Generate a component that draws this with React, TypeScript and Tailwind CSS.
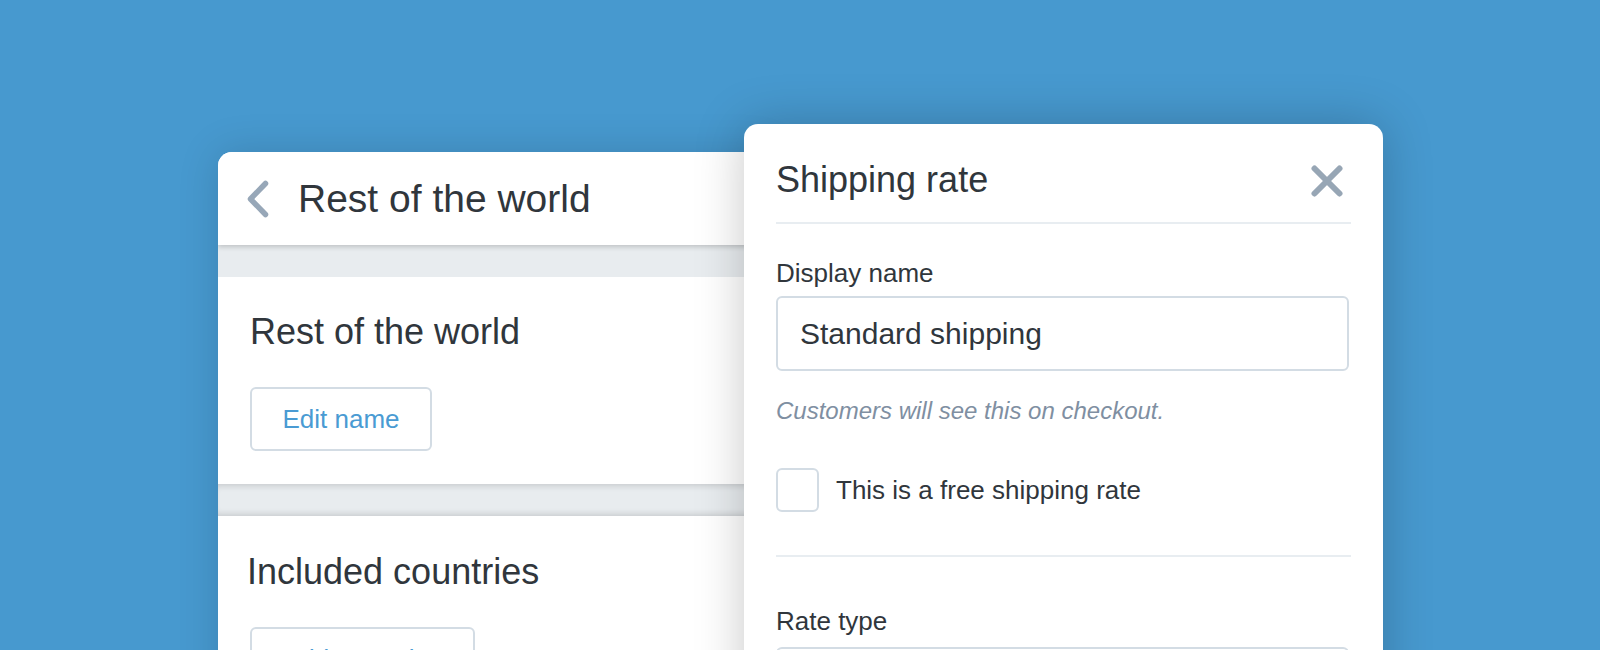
import React from 'react';

const font = { fontFamily: '"Liberation Sans", Arial, sans-serif' };

const ChevronLeft: React.FC = () => (
    <svg width="22" height="38" viewBox="0 0 22 38" fill="none">
        <polyline points="18.5,3.5 3.5,19 18.5,34.5" stroke="#97a7b8" strokeWidth="5.5" strokeLinecap="round" strokeLinejoin="round" />
    </svg>
);

const CloseIcon: React.FC = () => (
    <svg width="32" height="32" viewBox="0 0 32 32" fill="none">
        <line x1="3.5" y1="3.5" x2="28.5" y2="28.5" stroke="#97a6b5" strokeWidth="6" strokeLinecap="round" />
        <line x1="28.5" y1="3.5" x2="3.5" y2="28.5" stroke="#97a6b5" strokeWidth="6" strokeLinecap="round" />
    </svg>
);

const OutlineButton: React.FC<{ label: string; width: string }> = ({ label, width }) => (
    <button className={`${width} h-[64px] flex items-center justify-center border-2 border-[#d3dce4] rounded-[6px] bg-white text-[26px] text-[#4a9bd3]`}>
        {label}
    </button>
);

const ZonePanel: React.FC = () => (
    <div className="w-[560px] mt-[28px] shrink-0 bg-white rounded-t-[14px] overflow-hidden shadow-[0_0_40px_rgba(0,0,0,0.15)]">
        <div className="relative z-10 h-[93px] bg-white flex items-center pl-[29px] gap-[29px] shadow-[0_2px_5px_rgba(0,0,0,0.18)]">
            <ChevronLeft />
            <span className="text-[39px] leading-none text-[#30363c] font-light">Rest of the world</span>
        </div>
        <div className="h-[32px] bg-[#e8ecef]" />
        <div className="px-8 pt-[33px] pb-[33px]">
            <h2 className="text-[36px] leading-[43px] text-[#30363c]">Rest of the world</h2>
            <div className="mt-[34px]">
                <OutlineButton label="Edit name" width="w-[182px]" />
            </div>
        </div>
        <div className="h-[32px] bg-[#e8ecef] shadow-[inset_0_6px_6px_-4px_rgba(0,0,0,0.14),inset_0_-6px_6px_-4px_rgba(0,0,0,0.14)]" />
        <div className="px-8 pt-[34px] pb-10">
            <h2 className="-ml-[3px] text-[36px] leading-[43px] text-[#30363c]">Included countries</h2>
            <div className="mt-[34px]">
                <OutlineButton label="Add countries" width="w-[225px]" />
            </div>
        </div>
    </div>
);

const RateModal: React.FC = () => (
    <div className="relative z-20 w-[639px] shrink-0 -ml-[34px] bg-white rounded-t-[14px] px-8 pt-[34px] pb-10 shadow-[0_0_50px_rgba(0,0,0,0.22)]">
        <div className="flex items-center justify-between">
            <h1 className="text-[36px] leading-[43px] text-[#30363c]">Shipping rate</h1>
            <div className="mr-[8px] mt-[2px]">
                <CloseIcon />
            </div>
        </div>
        <div className="mt-[21px] h-[2px] bg-[#e8edf1]" />

        <label className="block mt-[33px] text-[26px] leading-[32px] text-[#30363c]">Display name</label>
        <input
            readOnly
            value="Standard shipping"
            className="mt-[7px] w-[573px] h-[75px] border-2 border-[#d3dce4] rounded-[6px] px-[22px] text-[30px] text-[#30363c] outline-none"
            style={font}
        />
        <p className="mt-[25px] text-[24px] leading-[30px] italic text-[#7f8fa2]">Customers will see this on checkout.</p>

        <div className="mt-[42px] flex items-center gap-[17px]">
            <div className="w-[43px] h-[44px] border-2 border-[#d3dce4] rounded-[6px]" />
            <span className="text-[26px] text-[#30363c]">This is a free shipping rate</span>
        </div>

        <div className="mt-[43px] h-[2px] bg-[#e8edf1]" />

        <label className="block mt-[48px] text-[26px] leading-[32px] text-[#30363c]">Rate type</label>
        <div className="mt-[10px] w-[573px] h-[75px] border-2 border-[#d3dce4] rounded-[6px]" />
    </div>
);

export default function App() {
    return (
        <div className="w-[1600px] h-[650px] overflow-hidden bg-[#4799cf]" style={font}>
            <div className="flex items-start pl-[218px] pt-[124px]">
                <ZonePanel />
                <RateModal />
            </div>
        </div>
    );
}
